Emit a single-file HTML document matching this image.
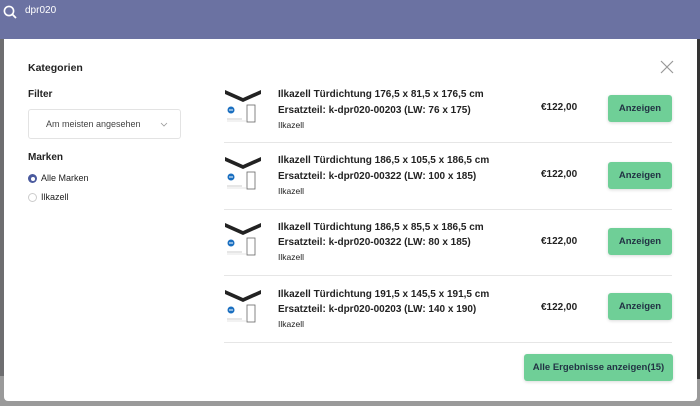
<!DOCTYPE html>
<html><head><style>
*{margin:0;padding:0;box-sizing:border-box}
body{width:700px;height:406px;overflow:hidden;position:relative;background:#6e6e70;font-family:"Liberation Sans",sans-serif;color:#222}
.top{position:absolute;left:0;top:0;width:700px;height:39px;background:#6b72a2}
.bgb{position:absolute;left:0;top:376px;width:700px;height:30px;background:#9a9a9a}
.bgr{position:absolute;left:696px;top:39px;width:4px;height:340px;background:#333}
.modal{position:absolute;left:4px;top:39px;width:693px;height:362px;background:#fff;border-radius:0 0 4px 4px}
.t{position:absolute;white-space:nowrap}
.b{font-weight:bold}
.sel{position:absolute;left:28px;top:109px;width:153px;height:30px;border:1px solid #e3e3e3;border-radius:3px}
.row{position:absolute;left:224px;width:448px;height:67px}
.sep{position:absolute;left:0;bottom:0;width:448px;height:1px;background:#e6e6e6}
.btn{position:absolute;background:#6fcf97;border-radius:3px;box-shadow:0 1px 3px rgba(0,0,0,.15);font-size:9.5px;font-weight:bold;color:#234;text-align:center}
</style></head><body>
<div class="top">
<svg style="position:absolute;left:3px;top:5px" width="14" height="14" viewBox="0 0 14 14"><circle cx="6" cy="6" r="4.6" fill="none" stroke="#fff" stroke-width="1.6"/><line x1="9.4" y1="9.4" x2="13" y2="13" stroke="#fff" stroke-width="1.8"/></svg>
<div class="t" style="left:25px;top:5px;font-size:10px;color:#fff">dpr020</div>
</div>
<div class="bgb"></div><div class="bgr"></div>
<div class="modal"></div>
<div class="t b" style="left:28px;top:62px;font-size:10.5px">Kategorien</div>
<div class="t b" style="left:28px;top:89px;font-size:10px">Filter</div>
<div class="sel"><div class="t" style="left:17px;top:9px;font-size:9px;color:#444">Am meisten angesehen</div>
<svg style="position:absolute;left:131px;top:12px" width="8" height="6"><path d="M1 1l3 3 3-3" fill="none" stroke="#999" stroke-width="0.8"/></svg></div>
<div class="t b" style="left:28px;top:152px;font-size:10px">Marken</div>
<div style="position:absolute;left:28px;top:174px;width:9px;height:9px;border-radius:50%;background:#4a5a9e"><div style="position:absolute;left:2.5px;top:2.5px;width:4px;height:4px;border-radius:50%;background:#fff"></div></div>
<div class="t" style="left:41px;top:173px;font-size:9px">Alle Marken</div>
<div style="position:absolute;left:28px;top:193px;width:9px;height:9px;border-radius:50%;border:1px solid #ccc"></div>
<div class="t" style="left:41px;top:192px;font-size:9px">Ilkazell</div>
<svg style="position:absolute;left:660px;top:60px" width="14" height="14"><path d="M1 1L13 13M13 1L1 13" stroke="#999" stroke-width="1.2"/></svg>

<div class="row" style="top:76px">
<svg style="position:absolute;left:0;top:12px" width="40" height="44" viewBox="0 0 40 44"><path d="M1 2L19 10 37 2 37 6 19 14 1 6Z" fill="#222"/><circle cx="7" cy="22" r="3.5" fill="#1a6fc0"/><line x1="5" y1="22" x2="9" y2="22" stroke="#fff"/><rect x="23" y="17" width="8" height="17" fill="none" stroke="#666" stroke-width="0.8"/><line x1="3" y1="31" x2="18" y2="31" stroke="#aaa" stroke-width="0.6"/><line x1="3" y1="33" x2="22" y2="33" stroke="#ccc" stroke-width="0.5"/></svg>
<div class="t b" style="left:54px;top:13px;font-size:10px">Ilkazell Türdichtung 176,5 x 81,5 x 176,5 cm</div>
<div class="t b" style="left:54px;top:29px;font-size:10px">Ersatzteil: k-dpr020-00203 (LW: 76 x 175)</div>
<div class="t" style="left:54px;top:44px;font-size:8.5px">Ilkazell</div>
<div class="t b" style="left:317px;top:26px;font-size:10px">€122,00</div>
<div class="btn" style="left:384px;top:19px;width:64px;height:27px;line-height:27px">Anzeigen</div>
<div class="sep"></div></div>

<div class="row" style="top:143px">
<svg style="position:absolute;left:0;top:12px" width="40" height="44" viewBox="0 0 40 44"><path d="M1 2L19 10 37 2 37 6 19 14 1 6Z" fill="#222"/><circle cx="7" cy="22" r="3.5" fill="#1a6fc0"/><line x1="5" y1="22" x2="9" y2="22" stroke="#fff"/><rect x="23" y="17" width="8" height="17" fill="none" stroke="#666" stroke-width="0.8"/><line x1="3" y1="31" x2="18" y2="31" stroke="#aaa" stroke-width="0.6"/><line x1="3" y1="33" x2="22" y2="33" stroke="#ccc" stroke-width="0.5"/></svg>
<div class="t b" style="left:54px;top:12px;font-size:10px">Ilkazell Türdichtung 186,5 x 105,5 x 186,5 cm</div>
<div class="t b" style="left:54px;top:28px;font-size:10px">Ersatzteil: k-dpr020-00322 (LW: 100 x 185)</div>
<div class="t" style="left:54px;top:43px;font-size:8.5px">Ilkazell</div>
<div class="t b" style="left:317px;top:26px;font-size:10px">€122,00</div>
<div class="btn" style="left:384px;top:19px;width:64px;height:27px;line-height:27px">Anzeigen</div>
<div class="sep"></div></div>

<div class="row" style="top:209px">
<svg style="position:absolute;left:0;top:12px" width="40" height="44" viewBox="0 0 40 44"><path d="M1 2L19 10 37 2 37 6 19 14 1 6Z" fill="#222"/><circle cx="7" cy="22" r="3.5" fill="#1a6fc0"/><line x1="5" y1="22" x2="9" y2="22" stroke="#fff"/><rect x="23" y="17" width="8" height="17" fill="none" stroke="#666" stroke-width="0.8"/><line x1="3" y1="31" x2="18" y2="31" stroke="#aaa" stroke-width="0.6"/><line x1="3" y1="33" x2="22" y2="33" stroke="#ccc" stroke-width="0.5"/></svg>
<div class="t b" style="left:54px;top:13px;font-size:10px">Ilkazell Türdichtung 186,5 x 85,5 x 186,5 cm</div>
<div class="t b" style="left:54px;top:28px;font-size:10px">Ersatzteil: k-dpr020-00322 (LW: 80 x 185)</div>
<div class="t" style="left:54px;top:43px;font-size:8.5px">Ilkazell</div>
<div class="t b" style="left:317px;top:27px;font-size:10px">€122,00</div>
<div class="btn" style="left:384px;top:19px;width:64px;height:27px;line-height:27px">Anzeigen</div>
<div class="sep"></div></div>

<div class="row" style="top:276px">
<svg style="position:absolute;left:0;top:12px" width="40" height="44" viewBox="0 0 40 44"><path d="M1 2L19 10 37 2 37 6 19 14 1 6Z" fill="#222"/><circle cx="7" cy="22" r="3.5" fill="#1a6fc0"/><line x1="5" y1="22" x2="9" y2="22" stroke="#fff"/><rect x="23" y="17" width="8" height="17" fill="none" stroke="#666" stroke-width="0.8"/><line x1="3" y1="31" x2="18" y2="31" stroke="#aaa" stroke-width="0.6"/><line x1="3" y1="33" x2="22" y2="33" stroke="#ccc" stroke-width="0.5"/></svg>
<div class="t b" style="left:54px;top:13px;font-size:10px">Ilkazell Türdichtung 191,5 x 145,5 x 191,5 cm</div>
<div class="t b" style="left:54px;top:28px;font-size:10px">Ersatzteil: k-dpr020-00203 (LW: 140 x 190)</div>
<div class="t" style="left:54px;top:43px;font-size:8.5px">Ilkazell</div>
<div class="t b" style="left:317px;top:26px;font-size:10px">€122,00</div>
<div class="btn" style="left:384px;top:17px;width:64px;height:27px;line-height:27px">Anzeigen</div>
<div class="sep"></div></div>

<div class="btn" style="left:524px;top:354px;width:149px;height:27px;line-height:27px">Alle Ergebnisse anzeigen(15)</div>
</body></html>
